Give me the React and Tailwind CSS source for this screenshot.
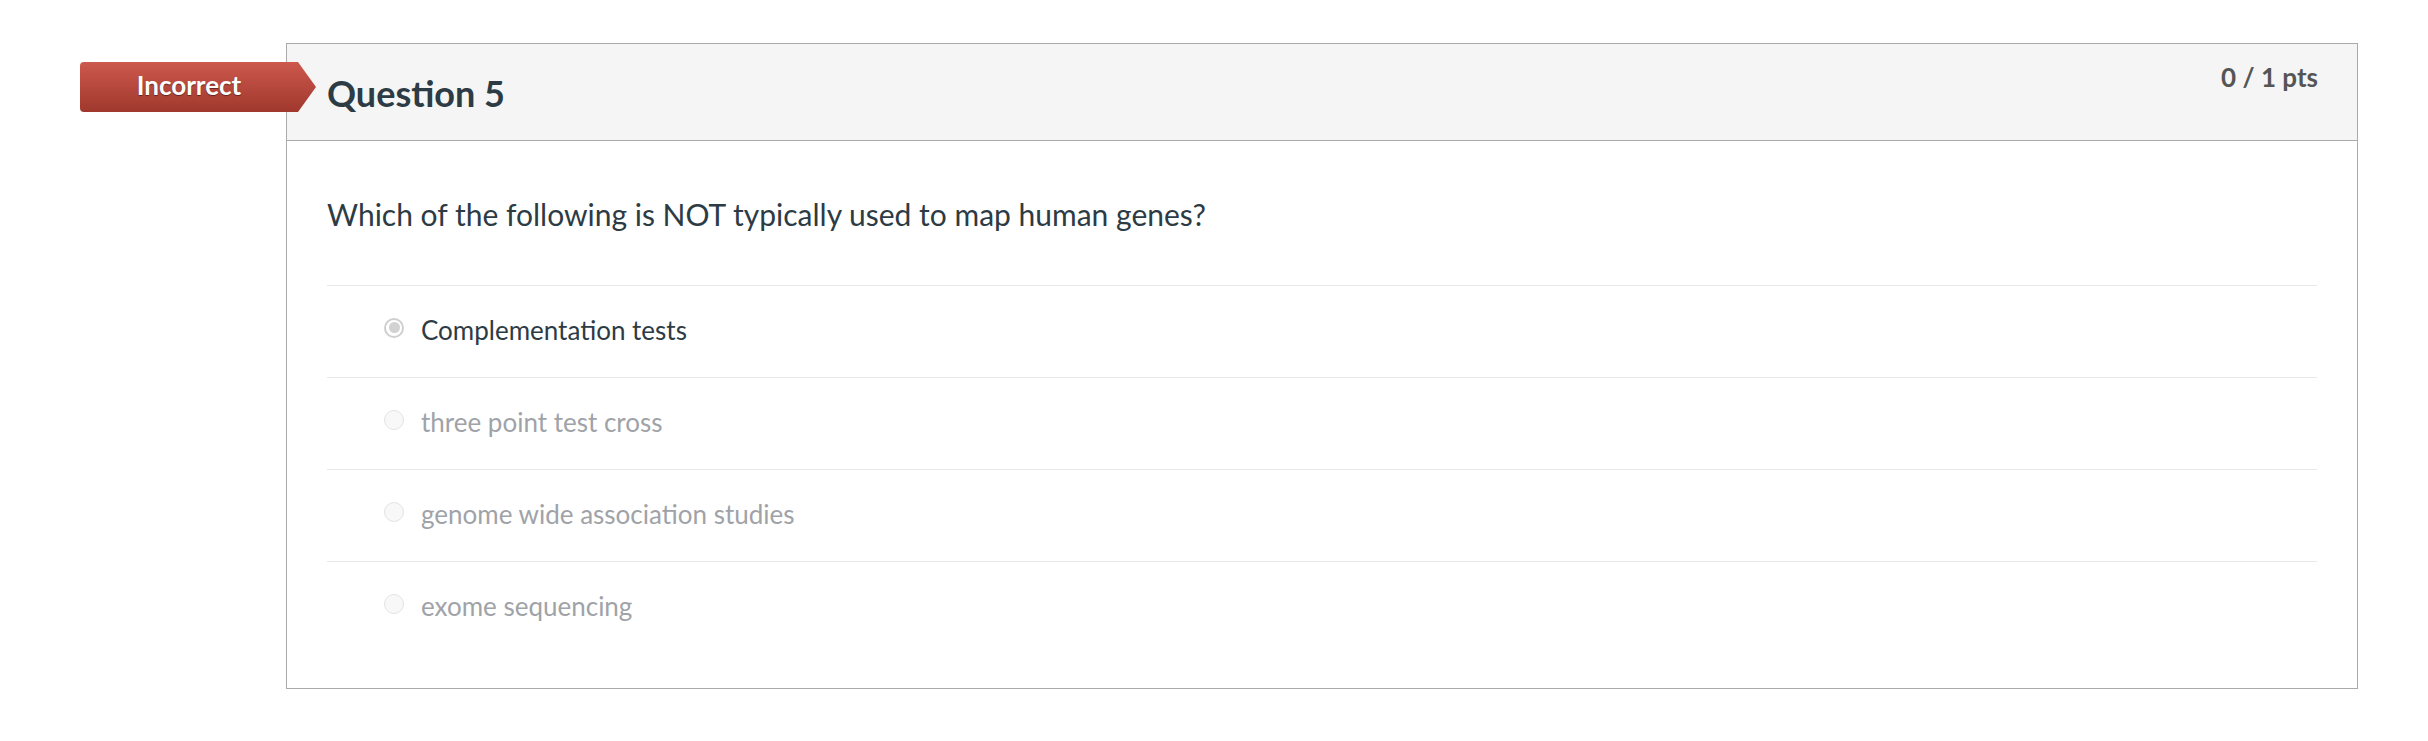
import React from 'react';

const answers = [
  { text: 'Complementation tests', selected: true },
  { text: 'three point test cross', selected: false },
  { text: 'genome wide association studies', selected: false },
  { text: 'exome sequencing', selected: false },
];

function Radio({ selected }) {
  if (selected) {
    return (
      <span className="flex h-[20px] w-[20px] shrink-0 items-center justify-center rounded-full border-2 border-[#cfcfcf] bg-white">
        <span className="block h-[11px] w-[11px] rounded-full bg-[#d2d2d2]"></span>
      </span>
    );
  }
  return <span className="block h-[20px] w-[20px] shrink-0 rounded-full border-[1.5px] border-[#e3e3e3] bg-[#f8f8f8]"></span>;
}

export default function App() {
  return (
    <div className="min-h-screen bg-white font-[Lato,'Open_Sans',sans-serif]">
      <div className="relative pl-[286px] pr-[70px] pt-[43px]">
        {/* result badge */}
        <div className="absolute left-[80px] top-[62px] h-[50px] w-[236px] rounded-l-[4px] bg-gradient-to-b from-[#cd584d] to-[#a0382d] [clip-path:polygon(0_0,218px_0,236px_25px,218px_50px,0_50px)]">
          <div className="w-[218px] text-center text-[26px] font-bold leading-[46px] text-white [text-shadow:0_1px_1px_rgba(0,0,0,0.45)]">
            Incorrect
          </div>
        </div>

        <div className="border border-[#aaaaaa]">
          <div className="flex h-[97px] items-start justify-between border-b border-[#aaaaaa] bg-[#f5f5f5] pl-[40px] pr-[39px]">
            <h2 className="mt-[28px] text-[36px] font-bold leading-[1.2] text-[#2d3b45]">Question 5</h2>
            <div className="mt-[15px] text-[26px] font-bold leading-[36px] text-[#555555]">0 / 1 pts</div>
          </div>

          <div className="px-[40px] pb-[35px] pt-[52px]">
            <p className="mb-[50px] text-[30px] leading-[42px] text-[#2d3b45]">
              Which of the following is NOT typically used to map human genes?
            </p>
            <div>
              {answers.map((a) => (
                <div key={a.text} className="flex items-center border-t border-[#e8e8e8] pb-[27px] pl-[57px] pt-[25px]">
                  <span className="flex -translate-y-[3px]">
                    <Radio selected={a.selected} />
                  </span>
                  <span className={`ml-[17px] text-[26px] leading-[39px] ${a.selected ? 'text-[#2d3b45]' : 'text-[#9fa3a8]'}`}>
                    {a.text}
                  </span>
                </div>
              ))}
            </div>
          </div>
        </div>
      </div>
    </div>
  );
}
